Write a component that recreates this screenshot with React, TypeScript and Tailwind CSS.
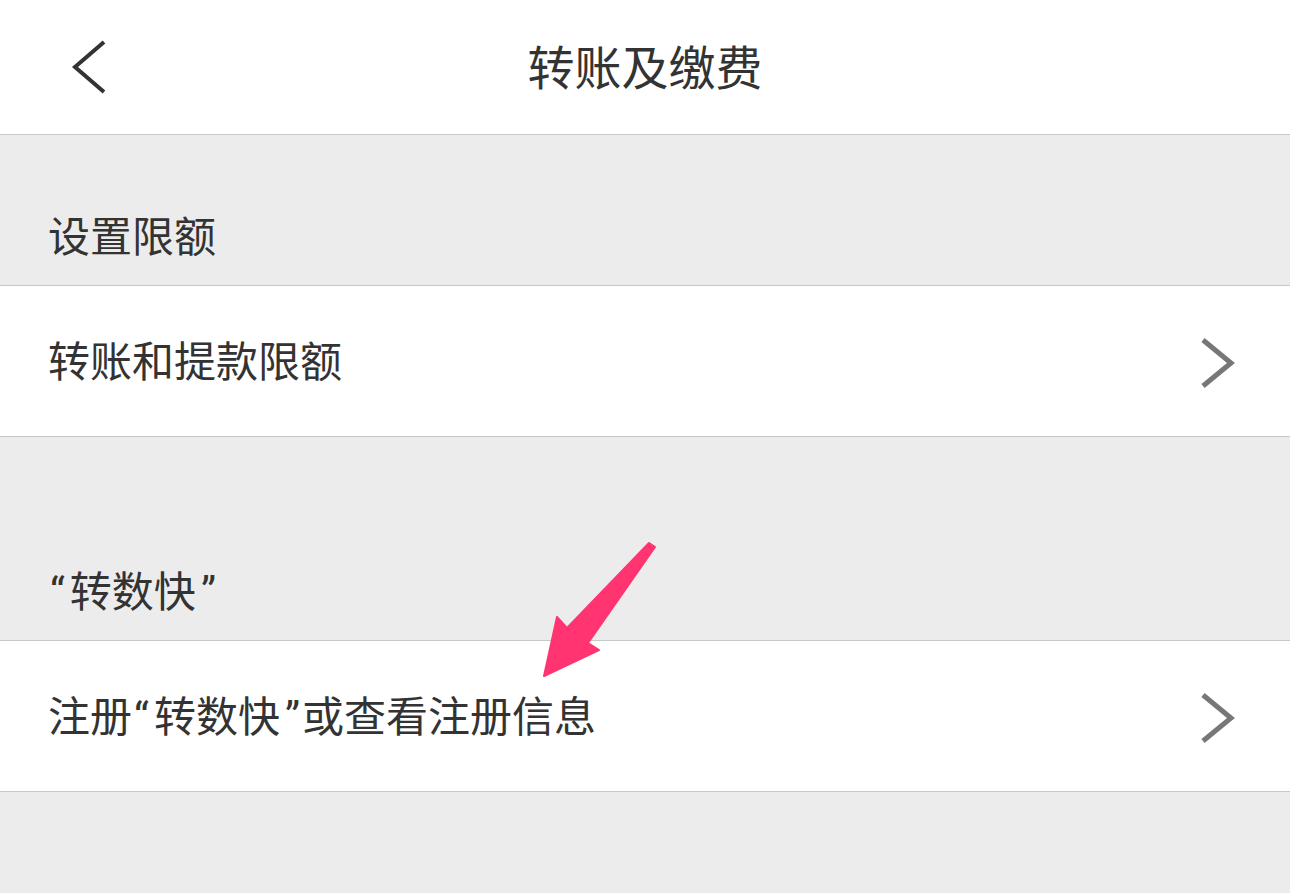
import { ReactNode } from "react";

function Open() {
  return <span className="pl-[2px] pr-[5px]">“</span>;
}

function Close() {
  return <span className="pl-[5px] pr-[2px]">”</span>;
}

function SectionLabel({ children, height }: { children: ReactNode; height: string }) {
  return (
    <div className={`flex items-end bg-[#ececec] border-b border-[#c8c8c8] px-[48px] pb-[26px] ${height}`}>
      <span className="text-[42px] leading-none text-[#333]">{children}</span>
    </div>
  );
}

function Row({ children }: { children: ReactNode }) {
  return (
    <div className="flex h-[151px] items-center justify-between bg-white border-b border-[#c8c8c8] pl-[48px] pr-[54px]">
      <span className="text-[42px] leading-none text-[#333] pt-[4px]">{children}</span>
      <svg width="36" height="52" viewBox="0 0 36 52" className="mt-[3px]">
        <path d="M3 3 L31 26 L3 49" fill="none" stroke="#777" strokeWidth="5" />
      </svg>
    </div>
  );
}

export default function App() {
  return (
    <div
      className="relative w-[1290px] h-[893px] overflow-hidden bg-[#ececec]"
      style={{ fontFamily: 'Roboto, "Noto Sans CJK SC", sans-serif' }}
    >
      <div className="relative flex h-[135px] items-center justify-center bg-white border-b border-[#c8c8c8]">
        <svg width="40" height="56" viewBox="0 0 40 56" className="absolute left-[69px] top-[40px]">
          <path d="M35 2 L6 27 L35 52" fill="none" stroke="#333" strokeWidth="4" />
        </svg>
        <span className="text-[47px] leading-none text-[#333] pt-[3px]">转账及缴费</span>
      </div>

      <SectionLabel height="h-[151px]">设置限额</SectionLabel>
      <Row>转账和提款限额</Row>

      <SectionLabel height="h-[204px]">
        <Open />转数快<Close />
      </SectionLabel>
      <Row>
        注册<Open />转数快<Close />或查看注册信息
      </Row>

      {/* pink annotation arrow */}
      <svg width="1290" height="893" className="pointer-events-none absolute left-0 top-0">
        <polygon
          points="649,543 655,547 588,643 599,650 544,676 557,617 567,628"
          fill="#ff3470"
          stroke="#ff3470"
          strokeWidth="2"
          strokeLinejoin="round"
        />
      </svg>
    </div>
  );
}
